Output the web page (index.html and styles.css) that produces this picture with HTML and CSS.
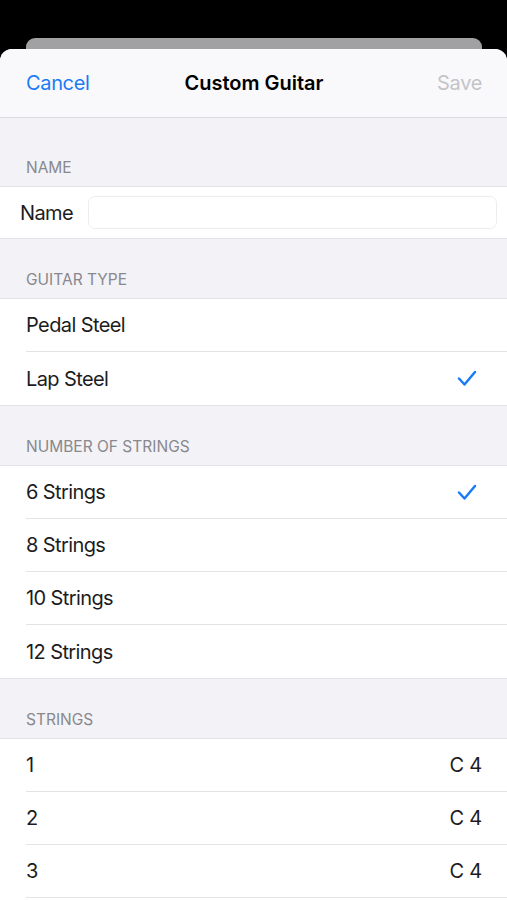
FILE: index.html
```html
<!DOCTYPE html>
<html lang="en">
<head>
    <meta charset="UTF-8">
    <meta name="viewport" content="width=device-width, initial-scale=1.0">
    <title>Custom Guitar</title>
    <link rel="stylesheet" href="styles.css">
</head>
<body>

<div class="backdrop">
    <div class="card-behind"></div>
</div>

<div class="sheet">
    <div class="nav-bar">
        <span class="nav-btn cancel">Cancel</span>
        <span class="nav-title">Custom Guitar</span>
        <span class="nav-btn save">Save</span>
    </div>

    <div class="section-header first">Name</div>
    <div class="group">
        <div class="row name-row">
            <span class="label">Name</span>
            <input type="text" class="name-field">
        </div>
    </div>

    <div class="section-header">Guitar Type</div>
    <div class="group">
        <div class="row"><span class="label">Pedal Steel</span></div>
        <div class="row">
            <span class="label">Lap Steel</span>
            <svg class="check" width="20" height="17" viewBox="0 0 20 17"><polyline points="2,8.5 7.5,14.5 18,2" fill="none" stroke="#1a7cf5" stroke-width="2.5" stroke-linecap="round" stroke-linejoin="round"/></svg>
        </div>
    </div>

    <div class="section-header">Number of Strings</div>
    <div class="group">
        <div class="row">
            <span class="label">6 Strings</span>
            <svg class="check" width="20" height="17" viewBox="0 0 20 17"><polyline points="2,8.5 7.5,14.5 18,2" fill="none" stroke="#1a7cf5" stroke-width="2.5" stroke-linecap="round" stroke-linejoin="round"/></svg>
        </div>
        <div class="row"><span class="label">8 Strings</span></div>
        <div class="row"><span class="label">10 Strings</span></div>
        <div class="row"><span class="label">12 Strings</span></div>
    </div>

    <div class="section-header">Strings</div>
    <div class="group open">
        <div class="row"><span class="label">1</span><span class="value">C 4</span></div>
        <div class="row"><span class="label">2</span><span class="value">C 4</span></div>
        <div class="row"><span class="label">3</span><span class="value">C 4</span></div>
    </div>
</div>

</body>
</html>
```

FILE: styles.css
```css
/* Base */
body { margin: 0; background: #000; font-family: Inter, "Noto Sans", sans-serif; color: #1c1c1e; }

/* Card peeking out behind the sheet */
.backdrop { padding-top: 38px; }
.card-behind { height: 11px; margin: 0 25px 0 26px; background: #a1a1a3; border-radius: 9px 9px 0 0; }

/* Sheet */
.sheet { background: #f2f2f7; border-radius: 12px 12px 0 0; overflow: hidden; }

/* Nav bar */
.nav-bar { height: 68px; display: grid; grid-template-columns: 1fr auto 1fr; align-items: center; padding: 0 25px 0 26px; background: #f9f9fb; border-bottom: 1px solid #dcdce0; }
.nav-btn { font-size: 20px; letter-spacing: -0.35px; }
.cancel { color: #1a7cf5; }
.save { color: #c4c4c7; justify-self: end; }
.nav-title { font-size: 20px; font-weight: 600; color: #000; }

/* Section headers */
.section-header { padding: 31px 26px 8px; line-height: 20px; font-size: 15.5px; text-transform: uppercase; color: #88888d; }
.section-header.first { padding-top: 40px; }

/* Groups and rows */
.group { background: #fff; border-top: 1px solid #e3e3e7; border-bottom: 1px solid #e3e3e7; }
.group.open { border-bottom: none; padding-bottom: 40px; }
.row { box-sizing: border-box; height: 53px; margin-left: 26px; padding-right: 25px; display: flex; align-items: center; justify-content: space-between; border-bottom: 1px solid #e3e3e6; font-size: 20px; letter-spacing: -0.6px; }
.row:last-child { border-bottom: none; }
.group.open .row:last-child { border-bottom: 1px solid #e3e3e6; }
.check { margin-right: 5px; }
.value { color: #1c1c1e; letter-spacing: -0.2px; }

/* Name row */
.name-row { height: 51px; margin-left: 20px; padding-right: 10px; }
.name-field { flex: 1; height: 33px; box-sizing: border-box; margin-left: 15px; border: 1px solid #ededef; border-radius: 7px; background: #fff; outline: none; }
```
